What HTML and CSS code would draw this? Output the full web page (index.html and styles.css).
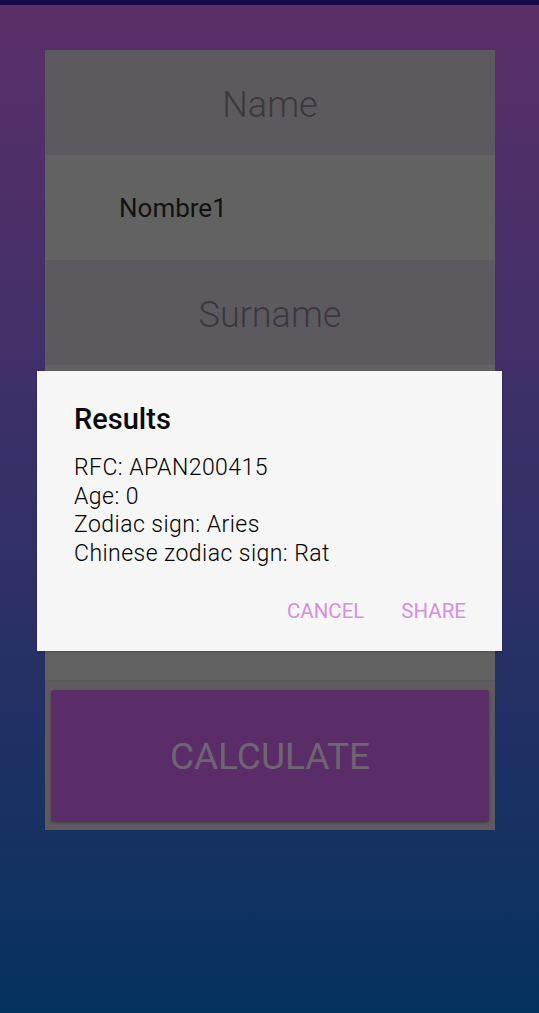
FILE: index.html
```html
<!DOCTYPE html>
<html lang="en">
<head>
<meta charset="utf-8">
<title>RFC Calculator</title>
<link rel="stylesheet" href="styles.css">
</head>
<body>
<div class="statusbar"></div>
<main class="form">
  <div class="row label-row"><span class="label">Name</span></div>
  <div class="row value-row"><span class="value">Nombre1</span></div>
  <div class="row label-row"><span class="label">Surname</span></div>
  <div class="row value-row"></div>
  <div class="row label-row"></div>
  <div class="row value-row"></div>
  <div class="button-area">
    <button class="calc-btn">CALCULATE</button>
  </div>
</main>
<div class="dialog">
  <h2 class="dialog-title">Results</h2>
  <div class="dialog-body">
    <p>RFC: APAN200415</p>
    <p>Age: 0</p>
    <p>Zodiac sign: Aries</p>
    <p>Chinese zodiac sign: Rat</p>
  </div>
  <div class="dialog-actions">
    <span class="action">CANCEL</span>
    <span class="action">SHARE</span>
  </div>
</div>
</body>
</html>
```

FILE: styles.css
```css
html, body {
  margin: 0;
  padding: 0;
}
body {
  width: 539px;
  height: 1013px;
  overflow: hidden;
  font-family: Roboto, "Noto Sans", sans-serif;
  background: linear-gradient(to bottom, #5b2f68 0%, #45306a 30%, #2c3066 60%, #04325f 100%);
  position: relative;
}
.statusbar {
  height: 5px;
  background: #170a45;
}
.form {
  margin: 45px 0 0 45px;
  width: 450px;
  display: flex;
  flex-direction: column;
}
.row {
  height: 105px;
  box-sizing: border-box;
  display: flex;
  align-items: center;
}
.label-row {
  background: #5d5a5f;
  justify-content: center;
  padding-top: 5px;
}
.value-row {
  background: #626262;
  padding-left: 74px;
}
.label {
  font-size: 36px;
  font-weight: 300;
  color: #3b383e;
}
.value {
  font-size: 26px;
  font-weight: 400;
  color: #121212;
}
.button-area {
  height: 150px;
  box-sizing: border-box;
  padding: 9px 6px 8px;
  background: #5e5a5f;
  border-top: 1px solid #5a585b;
}
.calc-btn {
  width: 100%;
  height: 132px;
  border: none;
  border-radius: 3px;
  background: #5b2d68;
  box-shadow: 0 1px 3px rgba(0,0,0,0.25);
  font-family: Roboto, sans-serif;
  font-size: 37px;
  font-weight: 400;
  color: #6d6571;
  padding: 0;
}
.dialog {
  position: absolute;
  left: 37px;
  top: 371px;
  width: 465px;
  height: 280px;
  box-sizing: border-box;
  background: #f6f6f6;
  padding: 32px 36px 0 37px;
  box-shadow: 0 1px 3px rgba(0,0,0,0.2);
}
.dialog-title {
  margin: 0;
  font-size: 29px;
  font-weight: 500;
  line-height: 32px;
  color: #0a0a0a;
}
.dialog-body {
  margin-top: 19px;
}
.dialog-body p {
  margin: 0;
  font-size: 23px;
  font-weight: 300;
  letter-spacing: 0.45px;
  line-height: 28.5px;
  color: #000;
}
.dialog-actions {
  margin-top: 30px;
  display: flex;
  justify-content: flex-end;
  gap: 37px;
}
.action {
  font-size: 20.5px;
  font-weight: 400;
  color: #d78ee0;
  line-height: 26px;
}
```
